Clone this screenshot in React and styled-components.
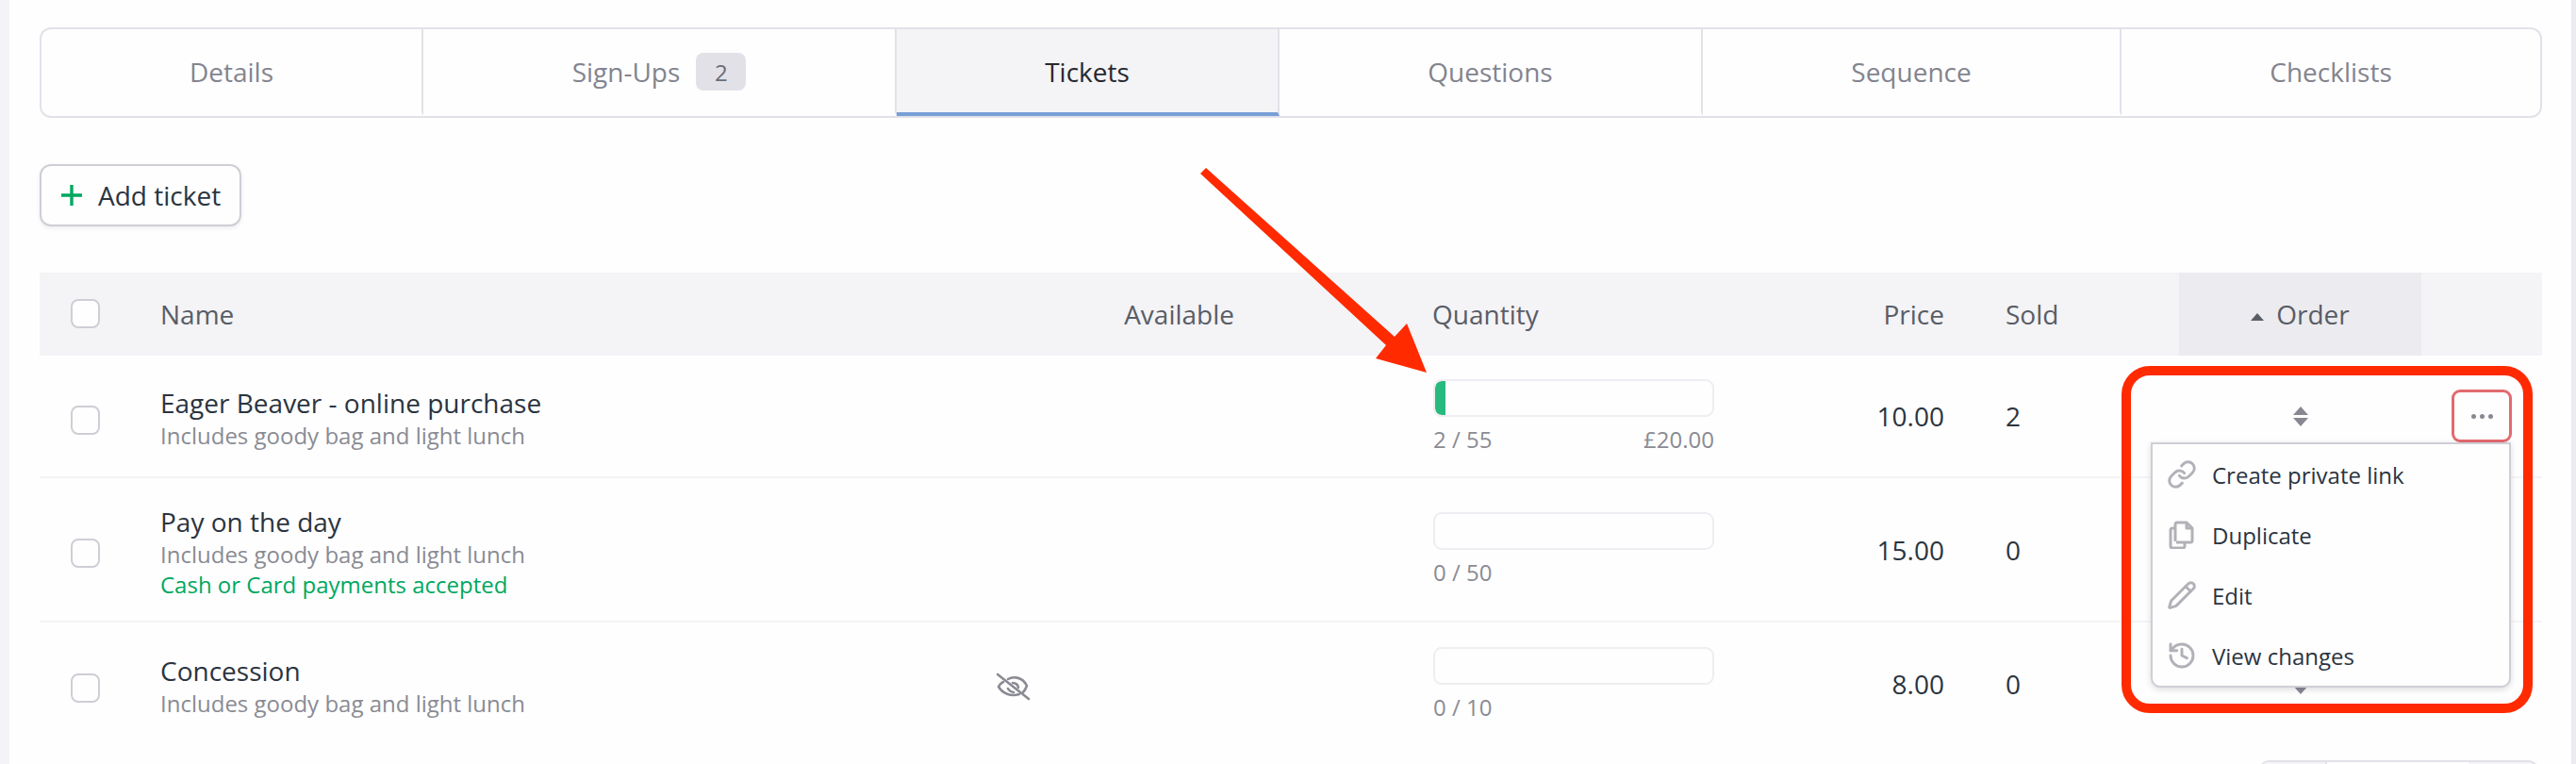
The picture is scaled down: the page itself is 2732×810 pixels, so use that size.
import React from "react"
import styled, { createGlobalStyle } from "styled-components"
import { Link, Pencil, History } from "lucide-react"

const GlobalStyle = createGlobalStyle`
  html, body {
    margin: 0;
    padding: 0;
    background: #fefefe;
  }
  * {
    box-sizing: border-box;
  }
`

const Page = styled.div`
  position: relative;
  width: 2732px;
  height: 810px;
  overflow: hidden;
  padding: 29px 31px 0 32px;
  background: #fefefe;
  border-left: 10px solid #f4f3f6;
  border-right: 5px solid #ecebef;
  font-family: "Open Sans", sans-serif;
  color: #2b3440;
`

const Tabs = styled.div`
  display: grid;
  grid-template-columns: 405px 502px 406px 449px 444px 1fr;
  height: 96px;
  border: 2px solid #e3e1e8;
  border-radius: 12px;
  overflow: hidden;
`

const Tab = styled.div`
  display: flex;
  align-items: center;
  justify-content: center;
  gap: 17px;
  padding-top: 2px;
  font-size: 28px;
  color: ${(p) => (p.$active ? "#26292f" : "#83848e")};
  background: ${(p) => (p.$active ? "#f4f3f6" : "transparent")};
  border-right: 2px solid #e3e1e8;
  border-bottom: 4px solid ${(p) => (p.$active ? "#789fd6" : "transparent")};
  &:last-child {
    border-right: none;
  }
`

const Badge = styled.span`
  display: flex;
  align-items: center;
  justify-content: center;
  width: 53px;
  height: 40px;
  border-radius: 8px;
  background: #e3e1e8;
  color: #6b6d77;
  font-size: 24px;
`

const AddButton = styled.button`
  display: flex;
  align-items: center;
  gap: 17px;
  width: 214px;
  height: 66px;
  margin-top: 49px;
  padding: 0 0 0 21px;
  background: #fefefe;
  border: 2px solid #cfced6;
  border-radius: 12px;
  box-shadow: 0 2px 4px rgba(40, 40, 60, 0.08);
  font-family: inherit;
  font-size: 28px;
  color: #2b3440;
`

const Grid = styled.div`
  display: grid;
  grid-template-columns: 128px 870px 269px 509px 244px 249px 257px 128px;
  align-items: center;
  height: ${(p) => p.$height}px;
  border-bottom: ${(p) => (p.$divided ? "2px solid #f4f3f6" : "none")};
`

const HeadRow = styled(Grid)`
  margin-top: 49px;
  background: #f4f3f6;
  color: #585d66;
  font-size: 28px;
  align-items: stretch;
`

const HeadCell = styled.div`
  display: flex;
  align-items: center;
  justify-content: ${(p) => p.$justify || "flex-start"};
  padding-left: ${(p) => p.$indent || 0}px;
  padding-bottom: 1px;
`

const OrderHead = styled(HeadCell)`
  justify-content: center;
  gap: 13px;
  background: #ecebef;
`

const UpTriangle = styled.span`
  width: 0;
  height: 0;
  margin-top: 7px;
  border-left: 7.5px solid transparent;
  border-right: 7.5px solid transparent;
  border-bottom: 8px solid #585d66;
`

const Check = styled.span`
  display: block;
  width: 31px;
  height: 31px;
  margin-left: 33px;
  margin-top: ${(p) => p.$offset || 0}px;
  background: #fefefe;
  border: 2px solid #cfced6;
  border-radius: 8px;
`

const NameCell = styled.div`
  display: flex;
  flex-direction: column;
  padding-top: 4px;
`

const Name = styled.div`
  font-size: 28px;
  line-height: 38px;
  color: #2b3440;
`

const Sub = styled.div`
  font-size: 24px;
  line-height: 32px;
  color: ${(p) => (p.$green ? "#00a85f" : "#8a8b93")};
`

const EyeCell = styled.div`
  display: flex;
  padding: 6px 0 0 17px;
`

const QuantityCell = styled.div`
  padding-left: 211px;
  color: #8a8b93;
  font-size: 24px;
`

const Bar = styled.div`
  height: 40px;
  background: #fefefe;
  border: 2px solid #efedf1;
  border-radius: 9px;
  overflow: hidden;
`

const BarFill = styled.div`
  height: 100%;
  background: #28b97e;
  border-radius: 7px 0 0 7px;
`

const BarLabels = styled.div`
  display: flex;
  justify-content: space-between;
  margin-top: 9px;
  line-height: 30px;
`

const Price = styled.div`
  text-align: right;
  font-size: 28px;
`

const Sold = styled.div`
  padding-left: 65px;
  font-size: 28px;
`

const OrderCell = styled.div`
  display: flex;
  justify-content: center;
  color: #878892;
`

const MoreCell = styled.div`
  position: relative;
  display: flex;
  justify-content: center;
`

const MoreButton = styled.div`
  display: flex;
  align-items: center;
  justify-content: center;
  gap: 4px;
  width: 64px;
  height: 56px;
  border: 3px solid ${(p) => (p.$open ? "#e36a6e" : "transparent")};
  border-radius: 9px;
`

const Dot = styled.span`
  width: 5px;
  height: 5px;
  border-radius: 50%;
  background: #878892;
`

const Menu = styled.div`
  position: absolute;
  top: 56px;
  right: 33px;
  z-index: 2;
  width: 382px;
  background: #fefefe;
  border: 2px solid #cfced6;
  border-radius: 0 0 10px 10px;
  box-shadow: 0 2px 6px rgba(40, 40, 60, 0.16);
`

const MenuItem = styled.div`
  display: flex;
  align-items: center;
  gap: 16px;
  height: 64px;
  padding-left: 15px;
  font-size: 24px;
  color: #2b3440;
  svg {
    flex: none;
    color: #b1b1b8;
  }
`

const Pager = styled.div`
  display: flex;
  width: 298px;
  height: 50px;
  margin: 16px 3px 0 auto;
  border: 2px solid #e3e1e8;
  border-radius: 12px;
  overflow: hidden;
`

const PagerCell = styled.div`
  width: ${(p) => p.$width}px;
  flex: ${(p) => (p.$width ? "none" : 1)};
  background: ${(p) => (p.$shaded ? "#f4f3f6" : "#fefefe")};
  border-right: ${(p) => (p.$line ? "2px solid #e3e1e8" : "none")};
`

const Annotation = styled.div`
  position: absolute;
  left: 2240px;
  top: 388px;
  z-index: 3;
  width: 436px;
  height: 368px;
  border: 10px solid #ff2a00;
  border-radius: 30px;
  pointer-events: none;
`

const ArrowSvg = styled.svg`
  position: absolute;
  left: 1250px;
  top: 170px;
  z-index: 3;
`

const tabs = [
  { label: "Details" },
  { label: "Sign-Ups", count: 2 },
  { label: "Tickets", active: true },
  { label: "Questions" },
  { label: "Sequence" },
  { label: "Checklists" },
]

const tickets = [
  { name: "Eager Beaver - online purchase", height: 130, divided: true, sold: 2, total: 55, price: "10.00", revenue: "£20.00", open: true },
  { name: "Pay on the day", note: "Cash or Card payments accepted", height: 153, divided: true, sold: 0, total: 50, price: "15.00" },
  { name: "Concession", height: 130, hidden: true, sold: 0, total: 10, price: "8.00" },
]

const PlusIcon = () => (
  <svg width="22" height="22" viewBox="0 0 22 22">
    <path d="M11 0v22M0 11h22" stroke="#00a85f" strokeWidth="3.4" />
  </svg>
)

const SortIcon = () => (
  <svg width="16" height="21" viewBox="0 0 16 21">
    <path d="M8 0l8 9H0zM0 12h16l-8 9z" fill="currentColor" />
  </svg>
)

const EyeOff = () => (
  <svg width="36" height="30" viewBox="0 0 36 30" fill="none" stroke="#8a8b93" strokeWidth="2.6" strokeLinecap="round">
    <path d="M1 2l33 26" />
    <path d="M12 7c5-3 15-3 20 7-1 3-2 5-4 7" />
    <path d="M7 10c-2 1-4 3-5 5 4 7 13 11 22 8" />
    <path d="M17 11c3 0 6 2 6 5" />
    <path d="M12 17c1 2 4 4 6 4" />
  </svg>
)

const CopyIcon = () => (
  <svg width="32" height="30" viewBox="-2 0 32 30" fill="none" stroke="currentColor" strokeWidth="3" strokeLinejoin="round">
    <path d="M7 22V4a2 2 0 0 1 2-2h10l6 6v13a2 2 0 0 1-2 2H8" />
    <path d="M19 2v6h6" />
    <path d="M7 8H4a2 2 0 0 0-2 2v17a2 2 0 0 0 2 2h11a2 2 0 0 0 2-2v-4" />
  </svg>
)

const menuItems = [
  { label: "Create private link", icon: <Link size={32} strokeWidth={2.2} /> },
  { label: "Duplicate", icon: <CopyIcon /> },
  { label: "Edit", icon: <Pencil size={32} strokeWidth={2.2} /> },
  { label: "View changes", icon: <History size={32} strokeWidth={2.2} /> },
]

const TicketRow = ({ ticket }) => (
  <Grid $height={ticket.height} $divided={ticket.divided}>
    <Check $offset={8} />
    <NameCell>
      <Name>{ticket.name}</Name>
      <Sub>Includes goody bag and light lunch</Sub>
      {ticket.note && <Sub $green>{ticket.note}</Sub>}
    </NameCell>
    <EyeCell>{ticket.hidden && <EyeOff />}</EyeCell>
    <QuantityCell>
      <Bar>
        {ticket.sold > 0 && <BarFill style={{ width: `${(ticket.sold / ticket.total) * 100}%` }} />}
      </Bar>
      <BarLabels>
        <span>
          {ticket.sold} / {ticket.total}
        </span>
        <span>{ticket.revenue}</span>
      </BarLabels>
    </QuantityCell>
    <Price>{ticket.price}</Price>
    <Sold>{ticket.sold}</Sold>
    <OrderCell>
      <SortIcon />
    </OrderCell>
    <MoreCell>
      <MoreButton $open={ticket.open}>
        <Dot />
        <Dot />
        <Dot />
      </MoreButton>
      {ticket.open && (
        <Menu>
          {menuItems.map((item) => (
            <MenuItem key={item.label}>
              {item.icon}
              {item.label}
            </MenuItem>
          ))}
        </Menu>
      )}
    </MoreCell>
  </Grid>
)

export default function App() {
  return (
    <Page>
      <GlobalStyle />
      <Tabs>
        {tabs.map((tab) => (
          <Tab key={tab.label} $active={tab.active}>
            {tab.label}
            {tab.count && <Badge>{tab.count}</Badge>}
          </Tab>
        ))}
      </Tabs>

      <AddButton>
        <PlusIcon />
        Add ticket
      </AddButton>

      <HeadRow $height={88}>
        <HeadCell>
          <Check />
        </HeadCell>
        <HeadCell>Name</HeadCell>
        <HeadCell $justify="flex-end">Available</HeadCell>
        <HeadCell $indent={210}>Quantity</HeadCell>
        <HeadCell $justify="flex-end">Price</HeadCell>
        <HeadCell $indent={65}>Sold</HeadCell>
        <OrderHead>
          <UpTriangle />
          Order
        </OrderHead>
        <HeadCell />
      </HeadRow>

      {tickets.map((ticket) => (
        <TicketRow key={ticket.name} ticket={ticket} />
      ))}

      <Pager>
        <PagerCell $width={71} $shaded $line />
        <PagerCell />
        <PagerCell $width={73} $shaded />
      </Pager>

      <Annotation />
      <ArrowSvg width="270" height="240" viewBox="1260 170 270 240">
        <polygon points="1273,184 1279,178 1479,357 1492,343 1513,395 1459,380 1470,366" fill="#ff2a00" />
      </ArrowSvg>
    </Page>
  )
}
